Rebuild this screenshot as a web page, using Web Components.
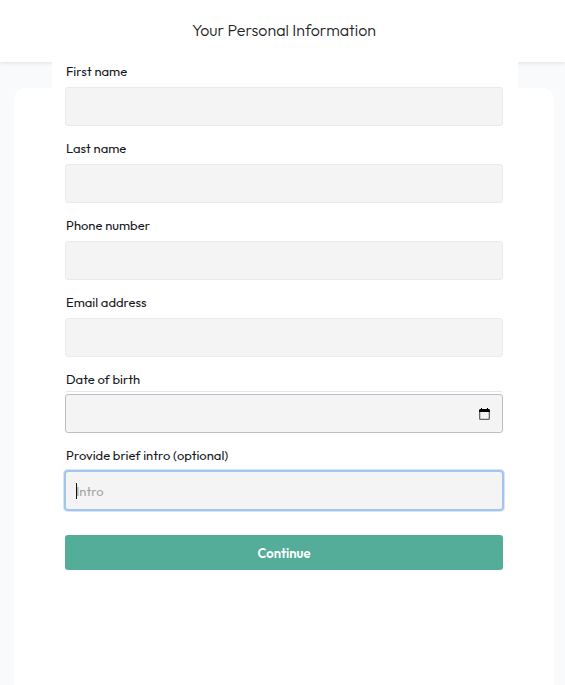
<!DOCTYPE html>
<html lang="en">
<head>
<meta charset="utf-8">
<meta name="viewport" content="width=device-width, initial-scale=1">
<title>Your Personal Information</title>
<style>
  html { height: 100%; }
  body { margin: 0; min-height: 100%; display: flex; flex-direction: column; background: #f9fafc; color: #16181b; font: 13px/18px Outfit, Lato, sans-serif; }
  info-page { flex: 1; }
</style>
</head>
<body>
<info-page>
  <page-header slot="header">Your Personal Information</page-header>
  <info-form>
    <form-field label="First name" name="first"></form-field>
    <form-field label="Last name" name="last"></form-field>
    <form-field label="Phone number" name="phone" type="tel"></form-field>
    <form-field label="Email address" name="email" type="email"></form-field>
    <form-field label="Date of birth" name="birth" type="date"></form-field>
    <form-field label="Provide brief intro (optional)" name="intro" placeholder="Intro" active></form-field>
    <submit-button>Continue</submit-button>
  </info-form>
</info-page>
<script>
class PageHeader extends HTMLElement {
  constructor() {
    super();
    this.attachShadow({ mode: 'open' }).innerHTML = `
      <style>
        :host { display: block; background: #fff; box-shadow: 0 1px 4px #0000001a; }
        h1 { margin: 0; padding: 18px 0 20px 3px; text-align: center; font-size: 16px; line-height: 24px; font-weight: 300; color: #222; }
      </style>
      <header><h1><slot></slot></h1></header>`;
  }
}

class InfoPage extends HTMLElement {
  constructor() {
    super();
    this.attachShadow({ mode: 'open' }).innerHTML = `
      <style>
        :host { display: flex; flex-direction: column; }
        main { flex: 1; display: flex; flex-direction: column; padding: 26px 11px 0 14px; }
        section { flex: 1; background: #fff; border-radius: 12px 12px 0 0; padding: 0 36px 24px 38px; }
      </style>
      <slot name="header"></slot>
      <main><section><slot></slot></section></main>`;
  }
}

class InfoForm extends HTMLElement {
  constructor() {
    super();
    this.attachShadow({ mode: 'open' }).innerHTML = `
      <style>
        :host { display: block; position: relative; margin-top: -26px; background: #fff; padding: 0 15px 0 13px; }
        form { display: flex; flex-direction: column; gap: 13px; }
      </style>
      <form><slot></slot></form>`;
  }
}

class FormField extends HTMLElement {
  connectedCallback() {
    if (this.shadowRoot) return;
    const type = this.getAttribute('type') || 'text';
    const active = this.hasAttribute('active');
    this.attachShadow({ mode: 'open' }).innerHTML = `
      <style>
        :host { display: block; }
        label { display: block; height: 25px; margin: 0 1px; }
        .box { display: grid; align-items: center; }
        .box > * { grid-area: 1 / 1; }
        input { box-sizing: border-box; width: 100%; min-width: 0; height: 39px; margin: 0; padding: 0 10px; font: inherit; color: inherit; background: #f4f4f4; border: 1px solid #ebebeb; border-radius: 3px; outline: 0; }
        input::placeholder { color: #a3a3a3; opacity: 1; }
        input[type=date] { border-color: #bdbdbd; }
        input::-webkit-datetime-edit { opacity: 0; }
        input::-webkit-calendar-picker-indicator { opacity: 0; }
        :host([type=date]) label { box-sizing: border-box; height: 22px; margin-bottom: 2px; border-bottom: 1px solid #dfe8f2; }
        :host([active]) input { border-color: #a3c4ef; box-shadow: 0 0 0 1px #a3c4ef, 0 0 0 2px #d5e5fa; caret-color: transparent; }
        svg { justify-self: end; margin-right: 13px; pointer-events: none; }
        .caret { width: 1px; height: 16px; margin-left: 11px; background: #111; pointer-events: none; }
      </style>
      <label for="control"></label>
      <div class="box">
        <input id="control">
        ${type === 'date' ? `<svg width="11" height="12" viewBox="0 0 11 12" aria-hidden="true">
          <path fill="none" stroke="#666" stroke-width="1.300" d="M.65 2v8.500q0 .85 .85 .85h8q.85 0 .85-.85V2"/>
          <path fill="#000" d="M2 0h1v1h5V0h1v1h1l1 1v2H0V2l1-1h1z"/></svg>` : ''}
        ${active ? '<span class="caret"></span>' : ''}
      </div>`;
    const input = this.shadowRoot.querySelector('input');
    this.shadowRoot.querySelector('label').textContent = this.getAttribute('label');
    input.type = type;
    input.name = this.getAttribute('name');
    input.placeholder = this.getAttribute('placeholder') || '';
  }
}

class SubmitButton extends HTMLElement {
  constructor() {
    super();
    this.attachShadow({ mode: 'open' }).innerHTML = `
      <style>
        :host { display: block; margin-top: 12px; }
        button { display: block; width: 100%; height: 35px; padding: 0; border: 0; border-radius: 3px; background: #54ad98; color: #fff; font: inherit; font-weight: 600; cursor: pointer; }
      </style>
      <button type="submit"><slot></slot></button>`;
  }
}

customElements.define('page-header', PageHeader);
customElements.define('info-page', InfoPage);
customElements.define('info-form', InfoForm);
customElements.define('form-field', FormField);
customElements.define('submit-button', SubmitButton);
</script>
</body>
</html>
